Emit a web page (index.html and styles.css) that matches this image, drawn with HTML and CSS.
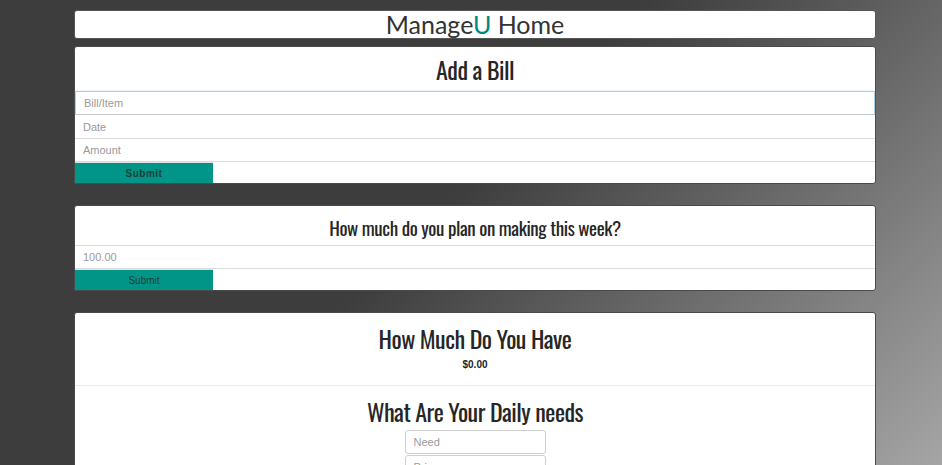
FILE: index.html
```html
<!DOCTYPE html>
<html>
<head>
<meta charset="utf-8">
<title>ManageU Home</title>
<link rel="stylesheet" href="styles.css">
</head>
<body>
<div class="wrap">
  <header class="panel brand">Manage<span class="u">U</span> Home</header>

  <section class="panel">
    <h2 class="title">Add a Bill</h2>
    <form class="stack">
      <input class="field focus" type="text" placeholder="Bill/Item">
      <input class="field tall" type="text" placeholder="Date">
      <input class="field" type="text" placeholder="Amount">
      <button type="button" class="btn btn-bold">Submit</button>
    </form>
  </section>

  <section class="panel">
    <h3 class="subtitle">How much do you plan on making this week?</h3>
    <form class="stack">
      <input class="field" type="text" placeholder="100.00">
      <button type="button" class="btn">Submit</button>
    </form>
  </section>

  <section class="panel">
    <div class="have">
      <h2 class="title">How Much Do You Have</h2>
      <p class="money">$0.00</p>
    </div>
    <div class="needs">
      <h2 class="title title-tight">What Are Your Daily needs</h2>
      <input class="small-field" type="text" placeholder="Need">
      <input class="small-field" type="text" placeholder="Price">
      <input class="small-field" type="text" placeholder="Quantity">
    </div>
  </section>
</div>
</body>
</html>
```

FILE: styles.css
```css
html {
  min-height: 100%;
  background: linear-gradient(135deg, #3d3d3d 0%, #3d3d3d 46%, #a5a5a5 100%) fixed;
}
body {
  margin: 0;
  padding-top: 10px;
  font-family: "Liberation Sans", Arial, sans-serif;
}
.wrap {
  margin-left: 74px;
  width: 802px;
  display: flex;
  flex-direction: column;
}
.panel {
  background: #fff;
  border: 1px solid #4a4a4a;
  border-radius: 3px;
  margin: 0 0 21px;
}
.brand {
  margin-bottom: 7px;
  height: 27px;
  font-family: Lato, sans-serif;
  font-size: 25px;
  line-height: 26px;
  text-align: center;
  color: #333;
  border-color: #555;
}
.brand .u { color: #00897b; }
.title {
  margin: 0;
  font-family: "Oswald", "Liberation Sans Narrow", "DejaVu Sans Condensed", sans-serif;
  font-weight: normal;
  font-size: 24px;
  letter-spacing: -0.5px;
  line-height: 44px;
  height: 44px;
  text-align: center;
  color: #262626;
}
.subtitle {
  margin: 0;
  font-family: "Oswald", "Liberation Sans Narrow", "DejaVu Sans Condensed", sans-serif;
  font-weight: normal;
  font-size: 19px;
  letter-spacing: -0.4px;
  line-height: 36px;
  padding-top: 3px;
  text-align: center;
  color: #262626;
  border-bottom: 1px solid #dcdcdc;
}
.stack {
  display: flex;
  flex-direction: column;
  align-items: flex-start;
}
.field {
  box-sizing: border-box;
  width: 100%;
  height: 23px;
  margin: 0;
  padding: 0 8px;
  border: none;
  border-bottom: 1px solid #dcdcdc;
  font-family: "Liberation Sans", Arial, sans-serif;
  font-size: 11px;
  color: #555;
  background: #fff;
  outline: none;
}
.field.tall { height: 24px; }
.field::placeholder { color: #9a9a9a; }
.field.focus {
  border: 1px solid #a6d0ec;
  border-bottom-color: #c6c6c6;
  height: 24px;
  box-shadow: 0 0 2px rgba(102, 175, 233, 0.35);
}
.btn {
  width: 138px;
  height: 21px;
  margin: 0;
  padding: 0;
  border: none;
  border-top: 1px solid #e2e2e2;
  background: #009587;
  color: #1d3e3a;
  font-family: "Liberation Sans", Arial, sans-serif;
  font-size: 10px;
}
.btn-bold {
  font-weight: bold;
  letter-spacing: 0.5px;
}
.have {
  padding: 3px 0 15px;
  border-bottom: 1px solid #ececec;
  text-align: center;
}
.money {
  margin: -1px 0 0;
  font-size: 10px;
  font-weight: bold;
  color: #222;
}
.needs {
  display: flex;
  flex-direction: column;
  align-items: center;
  padding-top: 4px;
}
.title-tight {
  height: 40px;
  line-height: 42px;
}
.small-field {
  box-sizing: border-box;
  width: 141px;
  height: 24px;
  margin: 0 0 1px;
  padding: 0 8px;
  border: 1px solid #cfcfcf;
  border-radius: 3px;
  font-family: "Liberation Sans", Arial, sans-serif;
  font-size: 11px;
  outline: none;
}
.small-field::placeholder { color: #9a9a9a; }
```
